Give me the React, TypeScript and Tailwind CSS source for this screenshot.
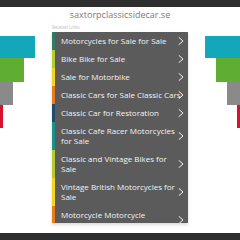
import React from 'react';

const links = [
  { label: 'Motorcycles for Sale for Sale', color: 'bg-[#2f7b63]' },
  { label: 'Bike Bike for Sale', color: 'bg-[#b5cc2e]' },
  { label: 'Sale for Motorbike', color: 'bg-[#f2d51f]' },
  { label: 'Classic Cars for Sale Classic Cars', color: 'bg-[#e57c1e]' },
  { label: 'Classic Car for Restoration', color: 'bg-[#1d4d6b]' },
  { label: 'Classic Cafe Racer Motorcycles for Sale', color: 'bg-[#1e8f8a]' },
  { label: 'Classic and Vintage Bikes for Sale', color: 'bg-[#b5cc2e]' },
  { label: 'Vintage British Motorcycles for Sale', color: 'bg-[#f2d51f]' },
  { label: 'Motorcycle Motorcycle Motorcycle', color: 'bg-[#e57c1e]' },
];

const Chevron = () => (
  <svg className="absolute right-[4px] top-1/2 -translate-y-1/2" width="6" height="9" viewBox="0 0 6 9" fill="none">
    <polyline points="1,1 5,4.5 1,8" stroke="#f2f2f2" strokeWidth="1" strokeLinecap="round" strokeLinejoin="round" />
  </svg>
);

const LeftBars = () => (
  <div className="w-[52px] pt-[29px] flex flex-col items-start">
    <div className="h-[22px] w-[35px] bg-[#12a8ba]" />
    <div className="h-[24px] w-[24px] bg-[#5fae32]" />
    <div className="h-[23px] w-[13px] bg-[#8a8a8a]" />
    <div className="h-[23px] w-[3px] bg-[#d6122f]" />
  </div>
);

const RightBars = () => (
  <div className="w-[52px] pt-[29px] flex flex-col items-end">
    <div className="h-[22px] w-[35px] bg-[#12a8ba]" />
    <div className="h-[24px] w-[24px] bg-[#5fae32]" />
    <div className="h-[23px] w-[13px] bg-[#8a8a8a]" />
    <div className="h-[23px] w-[3px] bg-[#d6122f]" />
  </div>
);

export default function App() {
  return (
    <div className="w-[240px] h-[240px] flex flex-col bg-white overflow-hidden" style={{ fontFamily: '"Open Sans", "Liberation Sans", sans-serif' }}>
      <div className="h-[7px] bg-[#2e2e2e]" />
      <div className="flex-1 flex">
        <LeftBars />
        <div className="w-[136px] flex flex-col">
          <div className="h-[16px] pt-[2px] text-center text-[9px] leading-[12px] text-[#7a7a7a] whitespace-nowrap">
            saxtorpclassicsidecar.se
          </div>
          <div className="h-[9px] text-[4.5px] leading-[8px] text-[#bdbdbd]">Related Links</div>
          <div className="h-[191px] bg-[#5b5b5b] overflow-hidden shadow-[0_2px_3px_rgba(0,0,0,0.15)]">
            {links.map((l) => (
              <div key={l.label} className="relative flex">
                <div className={`w-[3px] shrink-0 ${l.color}`} />
                <div className="flex-1 pl-[6px] pr-[6px] py-[4px] text-[8px] leading-[10px] text-[#f3f3f3]">
                  {l.label}
                </div>
                <Chevron />
              </div>
            ))}
          </div>
        </div>
        <RightBars />
      </div>
      <div className="h-[7px] bg-[#2e2e2e]" />
    </div>
  );
}
